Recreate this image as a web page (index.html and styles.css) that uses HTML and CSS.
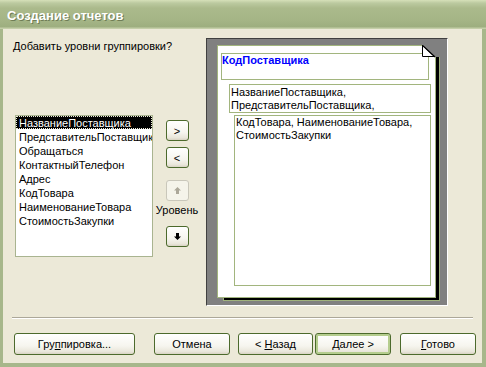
FILE: index.html
```html
<!DOCTYPE html>
<html lang="ru">
  <head>
    <meta charset="UTF-8" />
    <meta name="viewport" content="width=device-width, initial-scale=1.0" />
    <title>Создание отчетов</title>
    <link rel="stylesheet" href="styles.css">
  </head>
  <body>
    <div class="window">
      <div class="titlebar"><span class="title">Создание отчетов</span></div>
      <div class="client">
        <div class="main">
          <div class="left">
            <div class="prompt">Добавить уровни группировки?</div>
            <div class="picker">
              <ul class="listbox">
                <li class="selected">НазваниеПоставщика</li>
                <li>ПредставительПоставщика</li>
                <li>Обращаться</li>
                <li>КонтактныйТелефон</li>
                <li>Адрес</li>
                <li>КодТовара</li>
                <li>НаименованиеТовара</li>
                <li>СтоимостьЗакупки</li>
              </ul>
              <div class="movers">
                <button class="small add">&gt;</button>
                <button class="small remove">&lt;</button>
                <button class="small up" disabled>
                  <svg width="7" height="7" viewBox="0 0 7 7"><polygon points="3.5,0 7,3.5 5,3.5 5,7 2,7 2,3.5 0,3.5" fill="#aca899"/></svg>
                </button>
                <span class="level">Уровень</span>
                <button class="small down">
                  <svg width="7" height="7" viewBox="0 0 7 7"><polygon points="2,0 5,0 5,3.5 7,3.5 3.5,7 0,3.5 2,3.5" fill="#000"/></svg>
                </button>
              </div>
            </div>
          </div>
          <div class="preview">
            <div class="page">
              <div class="group g1">КодПоставщика</div>
              <div class="group g2">НазваниеПоставщика,<br>ПредставительПоставщика,</div>
              <div class="group g3">КодТовара, НаименованиеТовара,<br>СтоимостьЗакупки</div>
              <svg class="fold" width="18" height="13" viewBox="0 0 18 13">
                <polygon points="0,0 18,0 18,12 13,12" fill="#808080"/>
                <polygon points="0.5,0.5 0.5,11.5 12.5,11.5" fill="#fff" stroke="#000" stroke-width="1"/>
                <line x1="0" y1="0" x2="13" y2="12" stroke="#000" stroke-width="1.2"/>
              </svg>
            </div>
          </div>
        </div>
        <div class="separator"></div>
        <div class="buttons">
          <button class="btn btn-group">Гру<u>п</u>пировка...</button>
          <button class="btn btn-cancel">Отмена</button>
          <button class="btn btn-back">&lt; <u>Н</u>азад</button>
          <button class="btn btn-next default"><u>Д</u>алее &gt;</button>
          <button class="btn btn-done"><u>Г</u>отово</button>
        </div>
      </div>
    </div>
  </body>
</html>
```

FILE: styles.css
```css
body {
  margin: 0;
  font-family: "Liberation Sans", Arial, sans-serif;
  font-size: 11px;
  background: #ece9d8;
}

.window {
  width: 486px;
  height: 367px;
  display: flex;
  flex-direction: column;
  background: #ece9d8;
}

.titlebar {
  height: 29px;
  box-sizing: border-box;
  padding: 3px 0 0 7px;
  line-height: 26px;
  background: linear-gradient(#d6e0b9 0, #bccaa0 3px, #abba8c 8px, #a5b586 20px, #9dae7f 27px, #c4cea8 28px);
}
.title {
  color: #fff;
  font-weight: bold;
  font-size: 13px;
  text-shadow: 1px 1px 0 #6f7d55;
}

.client {
  flex: 1;
  border-left: 3px solid #a7b78b;
  border-right: 4px solid #a7b78b;
  border-bottom: 4px solid #a7b78b;
}

.main {
  display: flex;
  padding-top: 9px;
}

.left {
  width: 193px;
  padding-left: 10px;
}
.prompt {
  margin-top: 2px;
  line-height: 13px;
}

.picker {
  display: flex;
  margin-top: 62px;
  margin-left: 2px;
}

.listbox {
  width: 138px;
  height: 142px;
  box-sizing: border-box;
  margin: 0;
  padding: 0;
  list-style: none;
  border: 1px solid #a9b490;
  background: #fff;
  overflow: hidden;
  white-space: nowrap;
}
.listbox li {
  line-height: 14px;
  height: 14px;
  padding-left: 3px;
  overflow: hidden;
}
.listbox .selected {
  height: 13px;
  margin-bottom: 1px;
  line-height: 14px;
  background: #000;
  color: #fff;
  outline: 1px dotted #ece9d8;
  outline-offset: -1px;
}

.movers {
  width: 46px;
  margin-left: 1px;
  display: flex;
  flex-direction: column;
  align-items: center;
}
.level {
  margin-top: 3px;
  line-height: 13px;
}

button {
  font-family: "Liberation Sans", Arial, sans-serif;
  font-size: 11px;
  color: #000;
  padding: 0;
  border: 1px solid #4c6a2c;
  border-radius: 3px;
  background: linear-gradient(#ffffff, #f6f5ee 60%, #e9e6da 88%, #d8d3c3);
}
button:disabled {
  border-color: #c9c7ba;
  background: #f5f4ea;
}
button u {
  text-decoration: underline;
}

.small {
  width: 23px;
  height: 21px;
  display: flex;
  align-items: center;
  justify-content: center;
}
.add {
  margin-top: 5px;
}
.remove {
  margin-top: 6px;
}
.up {
  margin-top: 12px;
}
.down {
  margin-top: 9px;
}

.preview {
  width: 242px;
  height: 268px;
  box-sizing: border-box;
  background: #808080;
  border: 1px solid;
  border-color: #404040 #fff #fff #404040;
}

.page {
  position: relative;
  width: 219px;
  height: 253px;
  box-sizing: border-box;
  margin: 6px 0 0 10px;
  background: #fff;
  border: 1px solid #a2b57e;
  box-shadow: 5px 4px 0 -2px #000, 5px 4px 0 -1px #9fb27c;
  line-height: 13px;
}

.group {
  box-sizing: border-box;
  border: 1px solid #a2b57e;
  white-space: nowrap;
}
.g1 {
  width: 208px;
  height: 27px;
  margin: 7px 0 0 3px;
  color: #0000ff;
  font-weight: bold;
}
.g2 {
  width: 202px;
  height: 29px;
  margin: 4px 0 0 11px;
  padding: 1px 0 0 1px;
}
.g3 {
  width: 197px;
  height: 171px;
  margin: 2px 0 0 16px;
  padding-left: 1px;
}

.fold {
  position: absolute;
  top: -1px;
  right: -5px;
  display: block;
}

.separator {
  margin: 11px 0 0 9px;
  width: 461px;
  height: 1px;
  background: #aca899;
  border-bottom: 1px solid #fff;
}

.buttons {
  display: flex;
  margin-top: 14px;
}
.btn {
  height: 22px;
  width: 76px;
}
.btn-group {
  width: 121px;
  margin-left: 11px;
}
.btn-cancel {
  margin-left: 19px;
}
.btn-back {
  width: 75px;
  margin-left: 8px;
}
.btn-next {
  margin-left: 2px;
}
.btn-done {
  margin-left: 9px;
}
.default {
  box-shadow: inset 0 0 0 2px #b5cd8e;
}
```
